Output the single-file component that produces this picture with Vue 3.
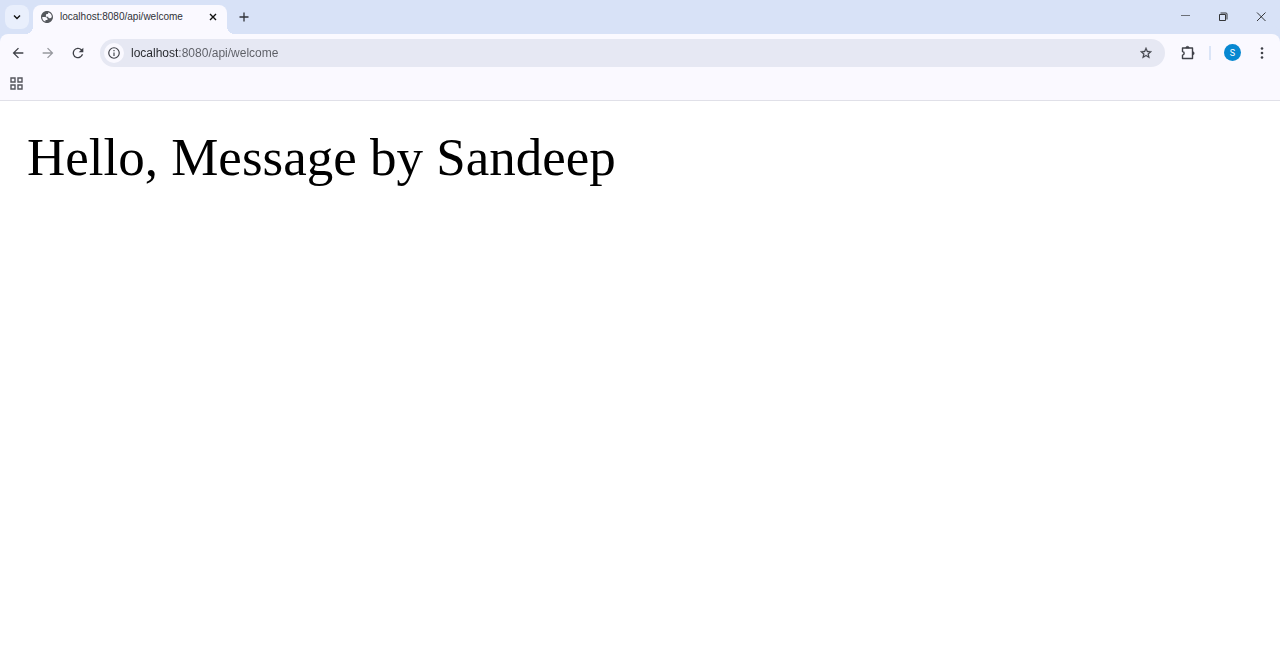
<script setup>
import { ref } from 'vue'

const host = 'localhost'
const path = ':8080/api/welcome'
const url = ref(host + path)
</script>

<template>
  <div class="browser">
    <header class="tabs">
      <button class="search" aria-label="Search tabs">
        <svg width="10" height="10" viewBox="0 0 10 10"><path d="M2 3.5 5 6.5 8 3.5" fill="none" stroke="currentColor" stroke-width="1.4" /></svg>
      </button>
      <div class="tab">
        <svg class="globe" width="12" height="12" viewBox="2 2 20 20"><path fill="currentColor" d="M12 2C6.48 2 2 6.48 2 12s4.48 10 10 10 10-4.48 10-10S17.52 2 12 2zM4 12h4.400c3.410.020 4.900 1.730 4.490 5.150H9.500v2.480A8 8 0 0 1 4 12zm16 0c-.81 1.340-1.810 2-3 2-2 0-3-.830-3-2.500h-3.800V9.300c0-1.500.900-2.300 2.600-2.300h1V5.800c0-.700.300-1.200.900-1.400A8 8 0 0 1 20 12z" /></svg>
        <span class="title">{{ url }}</span>
        <button class="close" aria-label="Close tab">
          <svg width="8" height="8" viewBox="0 0 8 8"><path d="m1 1 6 6M7 1 1 7" stroke="currentColor" stroke-width="1.400" /></svg>
        </button>
      </div>
      <button class="new" aria-label="New tab">
        <svg width="10" height="10" viewBox="0 0 10 10"><path d="M5 .5v9M.5 5h9" stroke="currentColor" stroke-width="1.300" /></svg>
      </button>
      <div class="window">
        <button aria-label="Minimize"><svg width="10" height="10" viewBox="0 0 10 10"><path d="M1 3.500h9" stroke="#6c7078" /></svg></button>
        <button aria-label="Restore"><svg width="10" height="10" viewBox="0 0 10 10"><path d="M1.500 2.500h6v6h-6zM2.500 1H8q1 0 1 1v5.500" fill="none" stroke="currentColor" stroke-width=".900" /></svg></button>
        <button aria-label="Close"><svg width="10" height="10" viewBox="0 0 10 10"><path d="m1 .5 8.500 8.500m0-8.500L1 9" stroke="currentColor" stroke-width=".900" /></svg></button>
      </div>
    </header>
    <nav class="toolbar">
      <button aria-label="Back"><svg width="16" height="16" viewBox="0 0 24 24"><path fill="currentColor" d="M20 11H7.830l5.590-5.590L12 4l-8 8 8 8 1.410-1.410L7.830 13H20z" /></svg></button>
      <button aria-label="Forward" disabled><svg width="16" height="16" viewBox="0 0 24 24"><path fill="currentColor" d="m12 4-1.410 1.410L16.170 11H4v2h12.170l-5.580 5.590L12 20l8-8z" /></svg></button>
      <button aria-label="Reload"><svg width="16" height="16" viewBox="0 0 24 24"><path fill="currentColor" d="M17.650 6.350A8 8 0 1 0 19.730 14h-2.080A6 6 0 1 1 12 6c1.660 0 3.140.690 4.220 1.780L13 11h7V4z" /></svg></button>
      <div class="address">
        <button class="info" aria-label="Site information"><svg width="14" height="14" viewBox="0 0 24 24"><path fill="currentColor" d="M11 7h2v2h-2zm0 4h2v6h-2zm1-9a10 10 0 1 0 0 20 10 10 0 0 0 0-20zm0 18a8 8 0 1 1 0-16 8 8 0 0 1 0 16z" /></svg></button>
        <input v-model="url" type="text" aria-label="Address" spellcheck="false" />
        <button class="star" aria-label="Bookmark this page"><svg width="14" height="14" viewBox="0 0 24 24"><path fill="currentColor" stroke="currentColor" stroke-width=".500" d="m22 9.240-7.190-.620L12 2 9.190 8.630 2 9.240l5.460 4.730L5.820 21 12 17.270 18.180 21l-1.630-7.030zM12 15.400l-3.760 2.270 1-4.280-3.320-2.880 4.380-.380L12 6.100l1.710 4.040 4.380.380-3.320 2.880 1 4.280z" /></svg></button>
      </div>
      <button class="extensions" aria-label="Extensions"><svg width="16" height="16" viewBox="0 0 16 16"><path d="M2.500 3h10v10.500h-10v-3.400c2.200-.3 2.200-3.300 0-3.600z" fill="none" stroke="currentColor" stroke-width="1.400" stroke-linejoin="round" /><path fill="currentColor" d="M5.800 3a1.700 1.700 0 0 1 3.400 0zM12.500 6.600a1.700 1.700 0 0 1 0 3.400z" stroke="currentColor" stroke-width=".600" /></svg></button>
      <span class="divider"></span>
      <button class="profile" aria-label="Profile">S</button>
      <button class="menu" aria-label="Menu"><svg width="16" height="16" viewBox="0 0 16 16" fill="currentColor"><circle cx="8" cy="3.500" r="1.300" /><circle cx="8" cy="8" r="1.300" /><circle cx="8" cy="12.500" r="1.300" /></svg></button>
    </nav>
    <div class="bookmarks">
      <button aria-label="Apps"><svg width="13" height="13" viewBox="0 0 13 13" fill="none" stroke="currentColor" stroke-width="1.400"><path d="M1 1h4v4H1zM8 1h4v4H8zM1 8h4v4H1zM8 8h4v4H8z" /></svg></button>
    </div>
    <main>Hello, Message by Sandeep</main>
  </div>
</template>

<style>
body {
  margin: 0;
  background: #fff;
}
</style>

<style scoped>
.browser {
  font-family: "Liberation Sans", sans-serif;
  color: #303238;
}
button {
  display: flex;
  align-items: center;
  justify-content: center;
  flex: none;
  padding: 0;
  border: 0;
  background: none;
  color: inherit;
  font: inherit;
}
svg {
  display: block;
}
.tabs {
  display: flex;
  align-items: center;
  height: 34px;
  padding-left: 5px;
  background: #d8e2f7;
}
.search {
  width: 24px;
  height: 24px;
  border-radius: 8px;
  background: #e9effc;
  color: #111;
}
.tab {
  position: relative;
  display: flex;
  align-items: center;
  box-sizing: border-box;
  align-self: flex-end;
  width: 194px;
  height: 29px;
  margin-left: 4px;
  padding: 0 8px 5px;
  border-radius: 8px 8px 0 0;
  background: #faf9ff;
}
.tab::before,
.tab::after {
  content: "";
  position: absolute;
  bottom: 0;
  width: 8px;
  height: 8px;
}
.tab::before {
  right: 100%;
  background: radial-gradient(circle at 0 0, transparent 8px, #faf9ff 8px);
}
.tab::after {
  left: 100%;
  background: radial-gradient(circle at 100% 0, transparent 8px, #faf9ff 8px);
}
.globe {
  flex: none;
  color: #55585d;
}
.title {
  flex: 1;
  margin-left: 7px;
  font-size: 10px;
  line-height: 16px;
  white-space: nowrap;
}
.close {
  width: 12px;
  height: 16px;
  color: #111;
}
.new {
  width: 24px;
  height: 24px;
  margin-left: 5px;
}
.window {
  display: flex;
  margin-left: auto;
  color: #222;
}
.window button {
  width: 38px;
  height: 32px;
}
.toolbar {
  display: flex;
  align-items: center;
  height: 37px;
  padding: 0 6px 0 3px;
  border-radius: 8px 8px 0 0;
  background: #faf9ff;
  box-shadow: 0 -8px 0 #d8e2f7;
  color: #3f4148;
}
.toolbar > button {
  width: 30px;
  height: 28px;
}
.toolbar > button:disabled {
  color: #97999f;
}
.address {
  display: flex;
  align-items: center;
  flex: 1;
  min-width: 0;
  height: 28px;
  margin-left: 7px;
  padding: 0 4px;
  border-radius: 14px;
  background: #e6e8f3;
}
.info {
  width: 20px;
  height: 20px;
  border-radius: 50%;
  background: #faf9ff;
}
input {
  flex: 1;
  min-width: 0;
  height: 20px;
  margin-left: 7px;
  padding: 0;
  border: 0;
  outline: 0;
  background: linear-gradient(90deg, #25272b 48px, #5b5d64 48px);
  background-clip: text;
  -webkit-text-fill-color: transparent;
  font-family: inherit;
  font-size: 12px;
}
.star {
  width: 30px;
  height: 20px;
}
.toolbar > .extensions {
  margin-left: 8px;
}
.divider {
  width: 2px;
  height: 14px;
  margin: 0 13px 0 6px;
  background: #dbe5f7;
}
.toolbar > .profile {
  width: 17px;
  height: 17px;
  border-radius: 50%;
  background: #0788d1;
  color: #fff;
  font-family: Roboto, sans-serif;
  font-size: 9px;
}
.toolbar > .menu {
  width: 24px;
  margin-left: 9px;
}
.bookmarks {
  display: flex;
  align-items: center;
  height: 25px;
  padding: 0 10px 4px;
  border-bottom: 1px solid #e0e0e8;
  background: #faf9ff;
  color: #55575e;
}
main {
  padding: 26px 27px;
  color: #000;
  font-family: "Liberation Serif", serif;
  font-size: 53px;
  line-height: 60px;
}
</style>
